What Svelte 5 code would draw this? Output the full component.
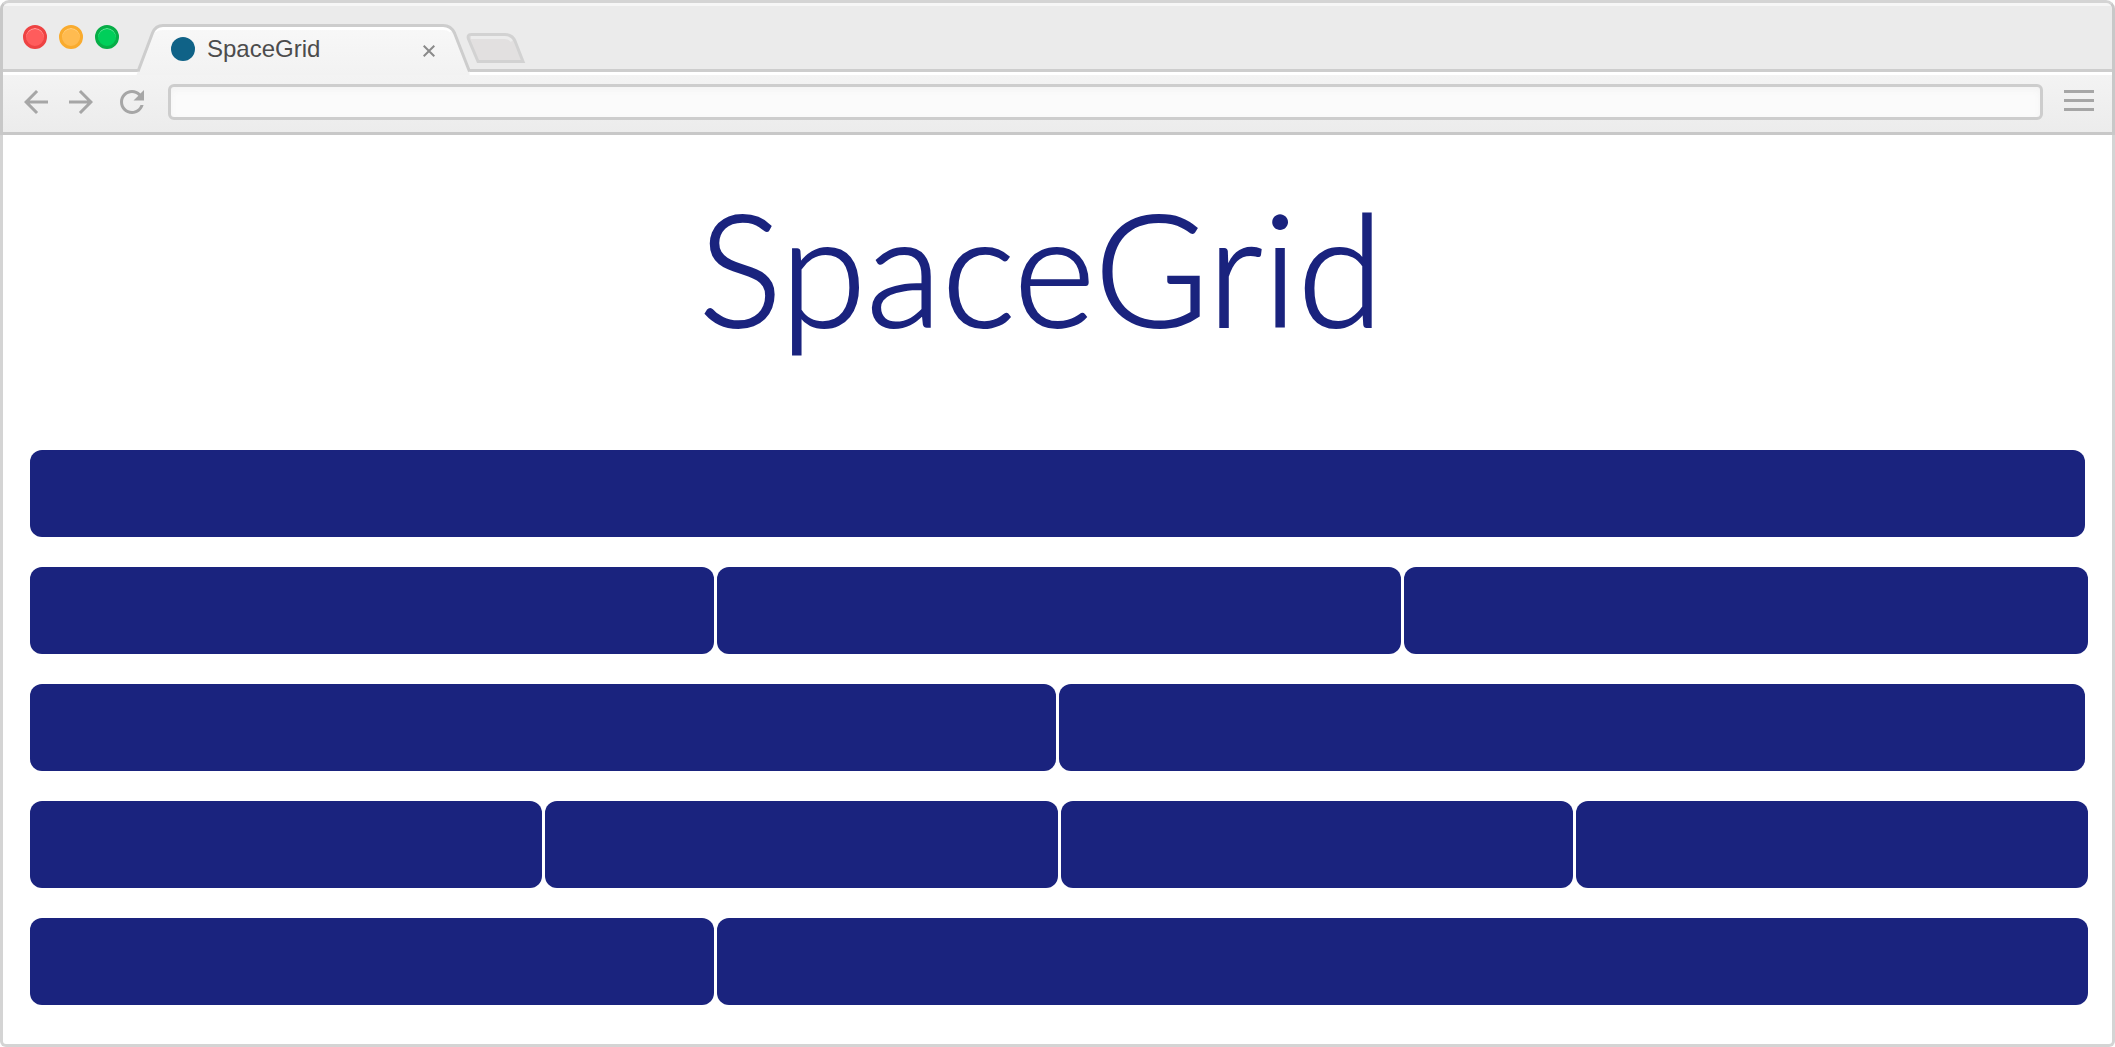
<script>
  const rows = [
    { spans: [12], inset: true },
    { spans: [4, 4, 4], inset: false },
    { spans: [6, 6], inset: true },
    { spans: [3, 3, 3, 3], inset: false },
    { spans: [4, 8], inset: false },
  ];
  let address = $state('');
</script>

<div class="window">
  <header class="chrome">
    <div class="strip">
      <div class="lights">
        <button class="light close" aria-label="Close window"></button>
        <button class="light minimise" aria-label="Minimise window"></button>
        <button class="light zoom" aria-label="Zoom window"></button>
      </div>
      <div class="tab">
        <svg class="tab-shape" viewBox="0 0 336 51" aria-hidden="true">
          <defs>
            <linearGradient id="tabFill" x1="0" y1="0" x2="0" y2="1">
              <stop offset="0" stop-color="#f8f8f8" />
              <stop offset="1" stop-color="#f2f2f2" />
            </linearGradient>
          </defs>
          <path d="M1.500 51L3 47L17.500 9Q20.500 1.500 28 1.500H308Q316 1.500 319.500 9L334.500 47V51Z" fill="url(#tabFill)" />
          <path d="M20 7Q22.500 4.500 28 4.500H308Q313 4.500 316 7" fill="none" stroke="#fff" stroke-width="3" />
          <path d="M3 47.500L17.500 9Q20.500 1.500 28 1.500H308Q316 1.500 319.500 9L334.500 47.500" fill="none" stroke="#cdcdcd" stroke-width="3" />
        </svg>
        <span class="favicon"></span>
        <span class="tab-title">SpaceGrid</span>
        <button class="tab-close" aria-label="Close tab">
          <svg viewBox="0 0 12 12"><path d="M.7.7L11.300 11.300M11.300.7L.7 11.300" stroke="#8a8a8a" stroke-width="2" /></svg>
        </button>
      </div>
      <button class="new-tab" aria-label="New tab">
        <svg viewBox="0 0 60 30">
          <path d="M12 28.500L2.500 6Q1 1.500 5 1.500H39Q46 1.500 49 8L57 28.500Z" fill="#e2e0e0" />
          <path d="M5 4.500H39Q43 4.500 46 8" fill="none" stroke="#ececec" stroke-width="3" />
          <path d="M12 28.500L2.500 6Q1 1.500 5 1.500H39Q46 1.500 49 8L57 28.500Z" fill="none" stroke="#d2d2d2" stroke-width="3" />
        </svg>
      </button>
    </div>
    <nav class="toolbar">
      <button class="tool" aria-label="Back">
        <svg viewBox="0 0 24 24"><path d="M20 11H7.830l5.590-5.590L12 4l-8 8 8 8 1.410-1.410L7.830 13H20v-2z" /></svg>
      </button>
      <button class="tool" aria-label="Forward">
        <svg viewBox="0 0 24 24"><path d="M12 4l-1.410 1.410L16.170 11H4v2h12.170l-5.580 5.590L12 20l8-8z" /></svg>
      </button>
      <button class="tool reload" aria-label="Reload">
        <svg viewBox="0 0 24 24"><path d="M17.650 6.350C16.200 4.900 14.210 4 12 4c-4.420 0-7.990 3.580-7.990 8s3.570 8 7.990 8c3.730 0 6.840-2.550 7.730-6h-2.080c-.82 2.330-3.040 4-5.650 4-3.310 0-6-2.690-6-6s2.690-6 6-6c1.660 0 3.140.69 4.220 1.780L13 11h7V4l-2.350 2.350z" /></svg>
      </button>
      <input class="address" type="text" aria-label="Address" bind:value={address} />
      <button class="menu" aria-label="Menu"><span></span><span></span><span></span></button>
    </nav>
  </header>

  <main>
    <h1>SpaceGrid</h1>
    <div class="rows">
      {#each rows as row}
        <div class="row" class:inset={row.inset}>
          {#each row.spans as span}
            <div class="cell span-{span}"></div>
          {/each}
        </div>
      {/each}
    </div>
  </main>
</div>

<style>
  :global(body) {
    margin: 0;
    background: #fff;
  }
  .window,
  .window * {
    box-sizing: border-box;
  }
  .window {
    display: flex;
    flex-direction: column;
    min-height: 100vh;
    font-family: 'Liberation Sans', Arial, sans-serif;
  }
  button {
    padding: 0;
    border: 0;
    background: none;
  }
  svg {
    display: block;
  }
  .chrome {
    border: 3px solid #c8c8c8;
    border-top-color: #d4d4d4;
    border-radius: 9px 9px 0 0;
    background: #ebebeb;
  }
  .strip {
    display: flex;
    height: 69px;
    border-bottom: 3px solid #cdcdcd;
    border-radius: 6px 6px 0 0;
    background: linear-gradient(#f6f6f6 3px, #ebebeb 3px, #ebebeb);
  }
  .lights {
    display: flex;
    gap: 12px;
    padding: 22px 0 0 20px;
  }
  .light {
    width: 24px;
    height: 24px;
    border: 3px solid;
    border-radius: 50%;
  }
  .close {
    border-color: #ee4343;
    background: #ff5c5c;
    box-shadow: inset 0 1px #ffa5a5;
  }
  .minimise {
    border-color: #f9ab2e;
    background: #ffbb50;
    box-shadow: inset 0 1px #ffd082;
  }
  .zoom {
    border-color: #07ad47;
    background: #00cf5a;
    box-shadow: inset 0 1px #6be59b;
  }
  .tab {
    position: relative;
    z-index: 1;
    display: flex;
    align-items: center;
    width: 336px;
    height: 51px;
    margin: 21px 0 0 16px;
    padding: 0 36px 2px;
  }
  .tab-shape {
    position: absolute;
    inset: 0;
    width: 100%;
    height: 100%;
  }
  .favicon {
    position: relative;
    width: 24px;
    height: 24px;
    border-radius: 50%;
    background: #0f6287;
  }
  .tab-title {
    position: relative;
    flex: 1;
    padding-left: 12px;
    font-size: 24px;
    line-height: 28px;
    color: #4c4c4c;
  }
  .tab-close {
    position: relative;
    width: 12px;
    height: 12px;
    margin-top: 4px;
  }
  .new-tab {
    width: 60px;
    height: 30px;
    margin: 30px 0 0 -5px;
  }
  .toolbar {
    display: flex;
    align-items: center;
    height: 60px;
    padding: 0 18px 3px 15px;
    border-top: 3px solid #fff;
    background: linear-gradient(#f3f3f3, #ececec);
  }
  .tool {
    width: 36px;
    height: 36px;
    margin-right: 9px;
    fill: #a6a6a6;
  }
  .reload {
    margin: 0 18px 0 6px;
  }
  .address {
    flex: 1;
    min-width: 0;
    height: 36px;
    padding: 0 9px;
    border: 3px solid #cdcdcd;
    border-radius: 6px;
    background: #fbfbfb;
    box-shadow: inset 0 3px 6px #f3f3f3;
    font: 18px 'Liberation Sans', Arial, sans-serif;
    outline: 0;
  }
  .menu {
    display: flex;
    flex-direction: column;
    gap: 6px;
    width: 30px;
    margin: 0 0 3px 21px;
  }
  .menu span {
    height: 3px;
    background: #a6a6a6;
  }
  main {
    flex: 1;
    padding: 42px 24px 39px 27px;
    border: 3px solid #d4d4d4;
    border-top: 0;
    border-radius: 0 0 6px 6px;
    background: #fff;
  }
  h1 {
    margin: 0 36px 93px 0;
    font-family: Lato, 'Open Sans', sans-serif;
    font-size: 156px;
    font-weight: 300;
    line-height: 180px;
    text-align: center;
    color: #1a237e;
    -webkit-text-stroke: 2px #1a237e;
  }
  .rows {
    display: grid;
    gap: 30px;
  }
  .row {
    display: grid;
    grid-template-columns: repeat(12, 1fr);
    gap: 3px;
  }
  .inset {
    margin-right: 3px;
  }
  .cell {
    height: 87px;
    border-radius: 12px;
    background: #1a237e;
  }
  .span-3 {
    grid-column: span 3;
  }
  .span-4 {
    grid-column: span 4;
  }
  .span-6 {
    grid-column: span 6;
  }
  .span-8 {
    grid-column: span 8;
  }
  .span-12 {
    grid-column: span 12;
  }
</style>
